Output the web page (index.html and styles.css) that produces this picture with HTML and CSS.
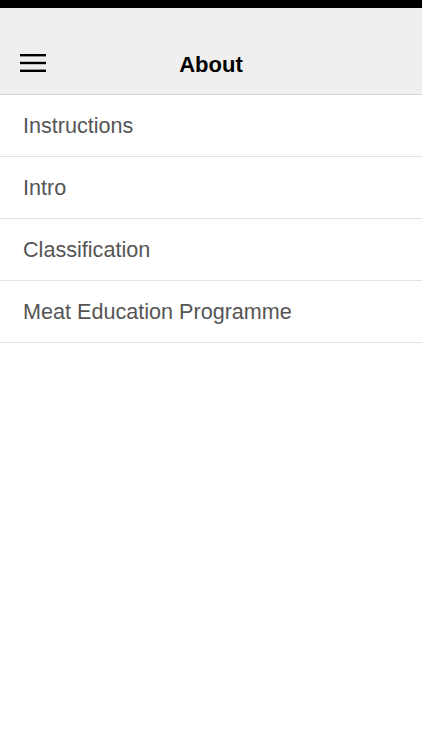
FILE: index.html
```html
<!DOCTYPE html>
<html lang="en">
<head>
  <meta charset="UTF-8">
  <title>About</title>
  <link rel="stylesheet" href="styles.css">
</head>
<body>
  <div class="status"></div>

  <div class="header">
    <button class="menu" aria-label="Menu">
      <svg width="26" height="20" viewBox="0 0 26 20">
        <rect x="0" y="1" width="26" height="2.4" fill="#000"/>
        <rect x="0" y="8.8" width="26" height="2.4" fill="#000"/>
        <rect x="0" y="16.6" width="26" height="2.4" fill="#000"/>
      </svg>
    </button>
    <h1>About</h1>
  </div>

  <ul class="list">
    <li>Instructions</li>
    <li>Intro</li>
    <li>Classification</li>
    <li>Meat Education Programme</li>
  </ul>
</body>
</html>
```

FILE: styles.css
```css
body {
  margin: 0;
  font-family: "Liberation Sans", Arial, sans-serif;
  background: #fff;
}
.status {
  height: 8px;
  background: #000;
}
.header {
  position: relative;
  height: 86px;
  background: #efefef;
  border-bottom: 1px solid #d6d6d6;
  display: flex;
  align-items: center;
  justify-content: center;
}
.header h1 {
  margin: 28px 0 0;
  font-size: 22px;
  font-weight: bold;
  color: #000;
}
.menu {
  position: absolute;
  left: 20px;
  top: 45px;
  padding: 0;
  border: 0;
  background: none;
  line-height: 0;
}
.list {
  list-style: none;
  margin: 0;
  padding: 0;
}
.list li {
  height: 61px;
  line-height: 61px;
  padding-left: 23px;
  font-size: 21.6px;
  color: #555;
  border-bottom: 1px solid #e2e2e2;
}
```
